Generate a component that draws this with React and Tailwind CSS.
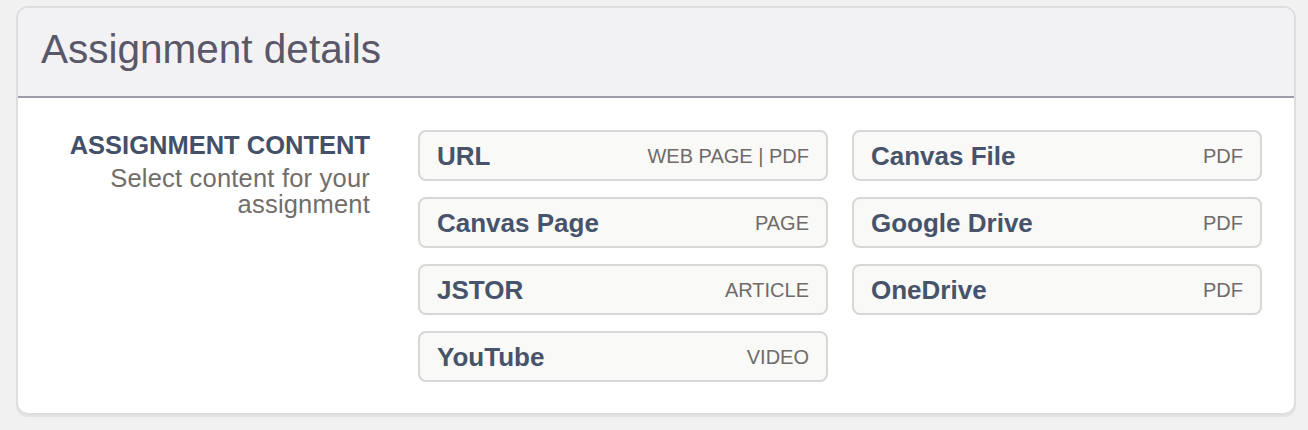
import React from "react";

const contentTypes = [
    { name: "URL", kind: "WEB PAGE | PDF" },
    { name: "Canvas File", kind: "PDF" },
    { name: "Canvas Page", kind: "PAGE" },
    { name: "Google Drive", kind: "PDF" },
    { name: "JSTOR", kind: "ARTICLE" },
    { name: "OneDrive", kind: "PDF" },
    { name: "YouTube", kind: "VIDEO" },
];

const ContentButton = ({ name, kind }) => (
    <button className="h-[51px] flex items-center justify-between px-[17px] bg-[#f9f9f8] border-2 border-[#d7d7d7] rounded-[8px] text-left">
        <span className="text-[26px] font-bold text-[#46536a] leading-none">{name}</span>
        <span className="text-[20px] text-[#6f6b68] leading-none">{kind}</span>
    </button>
);

const App = () => {
    return (
        <div className="min-h-[430px] bg-[#f1f1f1] pt-[6px] pl-[16px] font-['Liberation_Sans',Arial,sans-serif]">
            <div className="w-[1280px] bg-white border-2 border-[#dedede] rounded-[12px] overflow-hidden shadow-[0_2px_1px_rgba(0,0,0,0.06)]">
                {/* Header */}
                <div className="h-[90px] bg-[#f2f2f4] border-b-2 border-[#9e9caa] flex items-center pl-[23px] pb-[6px]">
                    <h1 className="text-[40.5px] leading-none text-[#595768]">Assignment details</h1>
                </div>

                {/* Body */}
                <div className="flex gap-[48px] pt-[32px] pb-[31px]">
                    <div className="w-[352px] text-right pt-[1px]">
                        <h2 className="text-[25.5px] font-bold leading-[28px] text-[#435168]">ASSIGNMENT CONTENT</h2>
                        <p className="text-[25.5px] leading-[26px] tracking-[0.2px] text-[#716d69] mt-[6px]">
                            Select content for your
                            <br />
                            assignment
                        </p>
                    </div>
                    <div className="w-[844px] grid grid-cols-2 gap-x-[24px] gap-y-[16px]">
                        {contentTypes.map((item) => (
                            <ContentButton key={item.name} name={item.name} kind={item.kind} />
                        ))}
                    </div>
                </div>
            </div>
        </div>
    );
};

export default App;
